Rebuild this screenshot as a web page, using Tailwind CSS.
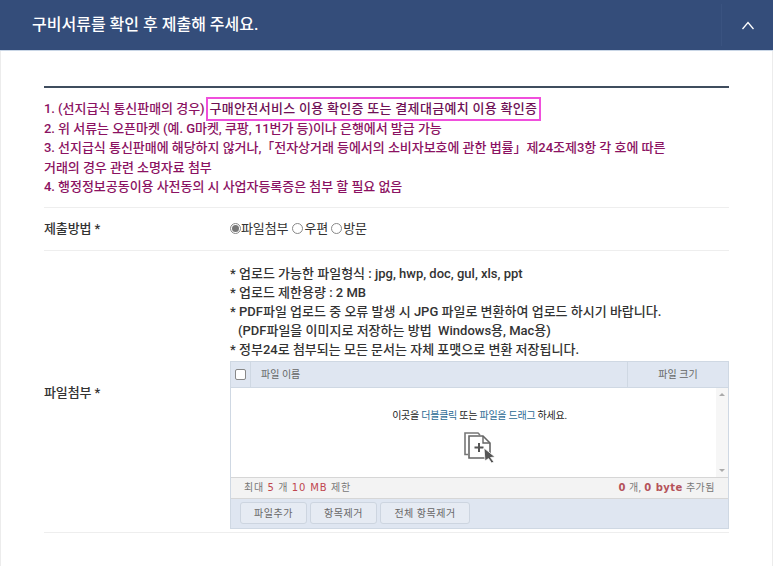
<!DOCTYPE html>
<html lang="ko">
<head>
  <meta charset="UTF-8">
  <title>구비서류 제출</title>
  <script src="https://cdn.jsdelivr.net/npm/@tailwindcss/browser@4"></script>
</head>
<body class="bg-white font-['Roboto','Noto_Sans_CJK_KR',sans-serif] overflow-hidden h-[566px]">

  <div class="h-[51px] bg-[#344d7a] border-b border-[#c9d6e6] flex items-center justify-between">
    <h2 class="pl-[32px] -mt-[1px] text-[16px] font-medium text-white tracking-[0px]">구비서류를 확인 후 제출해 주세요.</h2>
    <div class="w-[52px] h-[42px] border-l border-[#3a5380] flex items-center justify-center">
      <svg width="14" height="9" viewBox="0 0 14 9" fill="none" stroke="#fff" stroke-width="1.3"><path d="M1.5 8 L7 1.5 L12.5 8"/></svg>
    </div>
  </div>

  <div class="border-x border-[#ececec] pl-[43px] pr-[43px] pt-[35px] h-[515px]">
    <div class="border-t-[2px] border-[#3f4d5e]">

      <div class="pt-[11px] pb-[10px] border-b border-[#eeeeee] text-[13px] leading-[19.5px] font-medium text-[#8b1262] tracking-[-0.04px]">
        <p class="flex items-center">1. (선지급식 통신판매의 경우)<span class="border-[2px] border-[#f04fdc] px-[2px] text-[#6e0f55] leading-[20px] h-[24px] ml-[1px] -my-[3px] tracking-[0.3px]">구매안전서비스 이용 확인증 또는 결제대금예치 이용 확인증</span></p>
        <p>2. 위 서류는 오픈마켓 (예. G마켓, 쿠팡, 11번가 등)이나 은행에서 발급 가능</p>
        <p>3. 선지급식 통신판매에 해당하지 않거나,「전자상거래 등에서의 소비자보호에 관한 법률」제24조제3항 각 호에 따른<br>거래의 경우 관련 소명자료 첨부</p>
        <p>4. 행정정보공동이용 사전동의 시 사업자등록증은 첨부 할 필요 없음</p>
      </div>

      <div class="flex items-center h-[43px] border-b border-[#eeeeee] text-[13px] text-[#333] tracking-[-0.1px]">
        <div class="w-[186px] font-medium">제출방법 *</div>
        <div class="flex items-center">
          <span class="w-[11px] h-[11px] rounded-full border border-[#888] bg-white flex items-center justify-center"><span class="w-[7px] h-[7px] rounded-full bg-[#777]"></span></span>
          <span>파일첨부</span>
          <span class="w-[11px] h-[11px] rounded-full border border-[#888] ml-[4px] mr-[1px]"></span>
          <span>우편</span>
          <span class="w-[11px] h-[11px] rounded-full border border-[#888] ml-[3px] mr-[1px]"></span>
          <span>방문</span>
        </div>
      </div>

      <div class="flex items-center border-b border-[#eeeeee] pb-[3px] pt-[13px] text-[#333]">
        <div class="w-[186px] text-[13px] font-medium tracking-[-0.1px] pb-[7px]">파일첨부 *</div>
        <div class="w-[499px]">
          <div class="text-[13px] leading-[19px] font-medium tracking-[0px] mb-[2px]">
            <p>* 업로드 가능한 파일형식 : jpg, hwp, doc, gul, xls, ppt</p>
            <p>* 업로드 제한용량 : 2 MB</p>
            <p>* PDF파일 업로드 중 오류 발생 시 JPG 파일로 변환하여 업로드 하시기 바랍니다.</p>
            <p class="pl-[8px]">(PDF파일을 이미지로 저장하는 방법 &nbsp;Windows용, Mac용)</p>
            <p>* 정부24로 첨부되는 모든 문서는 자체 포맷으로 변환 저장됩니다.</p>
          </div>

          <div class="border border-[#cfd8e3] h-[168px] flex flex-col text-[10px] text-[#666]">
            <div class="h-[26px] bg-[#dfe6f1] border-b border-[#cfd8e3] flex items-center">
              <div class="w-[20px] h-full border-r border-[#cfd8e3] flex items-center justify-center">
                <span class="w-[11px] h-[11px] bg-white border border-[#888] rounded-[2px]"></span>
              </div>
              <div class="flex-1 pl-[10px]">파일 이름</div>
              <div class="w-[101px] h-full border-l border-[#cfd8e3] flex items-center justify-center">파일 크기</div>
            </div>

            <div class="flex-1 flex">
              <div class="flex-1 flex flex-col items-center pt-[20px] pl-[12px]">
                <p class="text-[#222] tracking-[-0.25px]">이곳을 <span class="text-[#2b6a94]">더블클릭</span> 또는 <span class="text-[#2b6a94]">파일을 드래그</span> 하세요.</p>
                <svg class="mt-[5px]" width="34" height="36" viewBox="0 0 34 34" fill="none">
                  <path d="M5 25.5 H2 V4 H15 L17 6" stroke="#777" stroke-width="1.6"/>
                  <path d="M6 29 V7 H20 L27 14 V29 Z" fill="#fff" stroke="#666" stroke-width="1.6"/>
                  <path d="M20 7 V14 H27" stroke="#666" stroke-width="1.4"/>
                  <path d="M16 14 V23 M11.5 18.5 H20.5" stroke="#555" stroke-width="2"/>
                  <path d="M21 19 L32 28 L27.5 28.5 L31 33 L28.5 34 L25.5 29.5 L22 32 Z" fill="#555" stroke="#fff" stroke-width=".8"/>
                </svg>
              </div>
              <div class="w-[12px] bg-[#f6f6f6] flex flex-col items-center justify-between py-[5px]">
                <span class="w-0 h-0 border-x-[3px] border-x-transparent border-b-[3px] border-b-[#aaa]"></span>
                <span class="w-0 h-0 border-x-[3px] border-x-transparent border-t-[3px] border-t-[#aaa]"></span>
              </div>
            </div>

            <div class="h-[22px] bg-[#f3f3f3] border-y border-[#d6d6d6] flex items-center justify-between px-[13px] tracking-[0.5px] text-[#777]">
              <div class="tracking-[0.9px]">최대 <b class="font-['DejaVu_Sans'] font-normal text-[#c0474f]">5</b> 개 <b class="font-['DejaVu_Sans'] font-normal text-[#c0474f]">10 MB</b> 제한</div>
              <div><b class="font-['DejaVu_Sans'] font-bold text-[#b5525a]">0</b> 개, <b class="font-['DejaVu_Sans'] font-bold text-[#b5525a]">0 byte</b> 추가됨</div>
            </div>

            <div class="h-[29px] bg-[#dfe6f1] flex items-center gap-[3px] pl-[9px]">
              <button class="w-[67px] h-[22px] bg-[#e6ebf3] border border-[#cdd5e0] rounded-[3px] tracking-[0.5px]">파일추가</button>
              <button class="w-[67px] h-[22px] bg-[#e6ebf3] border border-[#cdd5e0] rounded-[3px] tracking-[0.5px]">항목제거</button>
              <button class="w-[90px] h-[22px] bg-[#e6ebf3] border border-[#cdd5e0] rounded-[3px] tracking-[0.5px]">전체 항목제거</button>
            </div>
          </div>
        </div>
      </div>

    </div>
  </div>
</body>
</html>
